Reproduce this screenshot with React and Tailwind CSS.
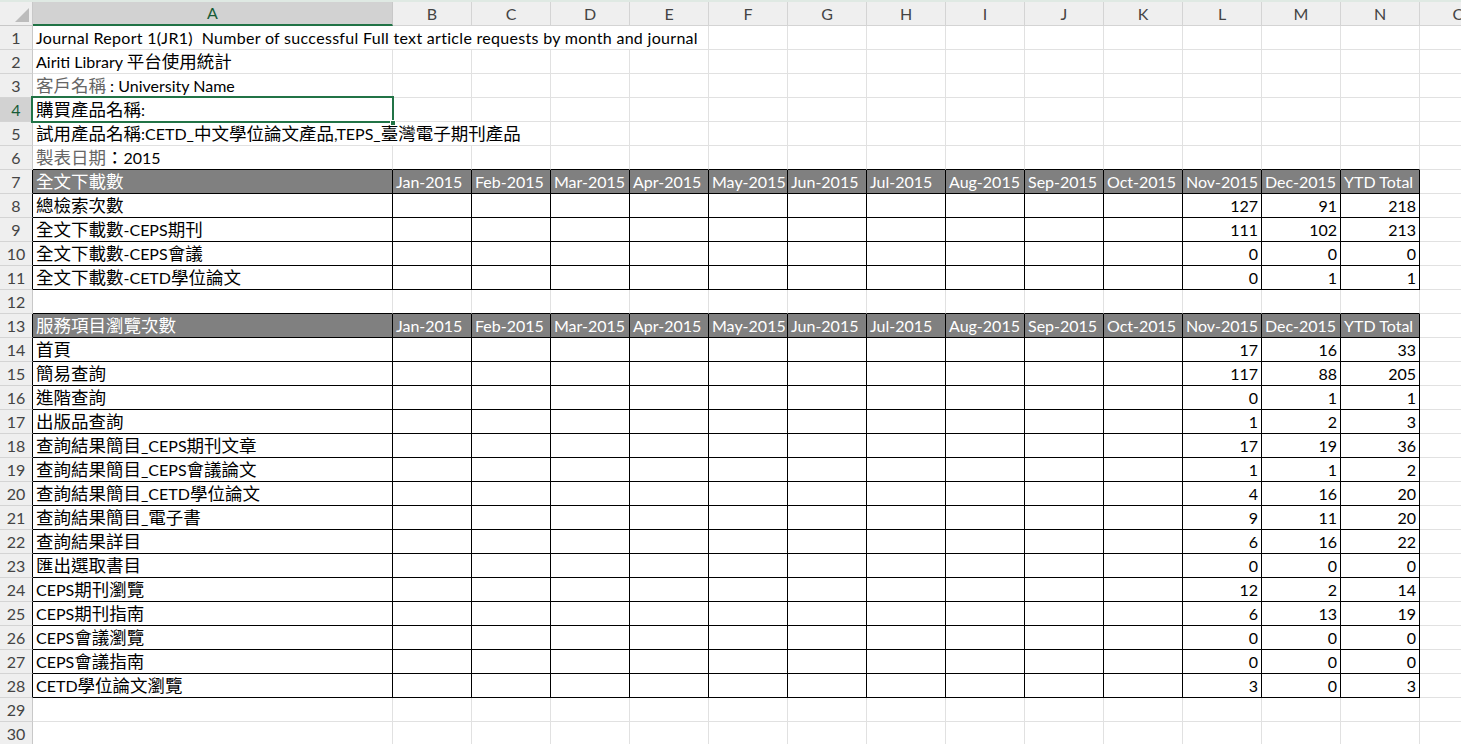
import React from 'react';

const COLS = ['A', 'B', 'C', 'D', 'E', 'F', 'G', 'H', 'I', 'J', 'K', 'L', 'M', 'N', 'O'];
const MONTHS = ['Jan-2015', 'Feb-2015', 'Mar-2015', 'Apr-2015', 'May-2015', 'Jun-2015', 'Jul-2015', 'Aug-2015', 'Sep-2015', 'Oct-2015', 'Nov-2015', 'Dec-2015', 'YTD Total'];

const table1 = [
  ['總檢索次數', 127, 91, 218],
  ['全文下載數-CEPS期刊', 111, 102, 213],
  ['全文下載數-CEPS會議', 0, 0, 0],
  ['全文下載數-CETD學位論文', 0, 1, 1],
];

const table2 = [
  ['首頁', 17, 16, 33],
  ['簡易查詢', 117, 88, 205],
  ['進階查詢', 0, 1, 1],
  ['出版品查詢', 1, 2, 3],
  ['查詢結果簡目_CEPS期刊文章', 17, 19, 36],
  ['查詢結果簡目_CEPS會議論文', 1, 1, 2],
  ['查詢結果簡目_CETD學位論文', 4, 16, 20],
  ['查詢結果簡目_電子書', 9, 11, 20],
  ['查詢結果詳目', 6, 16, 22],
  ['匯出選取書目', 0, 0, 0],
  ['CEPS期刊瀏覽', 12, 2, 14],
  ['CEPS期刊指南', 6, 13, 19],
  ['CEPS會議瀏覽', 0, 0, 0],
  ['CEPS會議指南', 0, 0, 0],
  ['CETD學位論文瀏覽', 3, 0, 3],
];

// CJK runs get the bigger size, like the Excel fallback font does
function mix(text, extra = '') {
  const parts = text.split(/([\u3000-\u9fff\uff00-\uffef]+)/);
  return parts.map((p, i) =>
    /[\u3000-\u9fff\uff00-\uffef]/.test(p) ? (
      <span key={i} className={`text-[17.5px] ${extra}`}>{p}</span>
    ) : (
      <span key={i}>{p}</span>
    )
  );
}

function buildRows() {
  const rows = {};
  rows[1] = { span: 5, text: <span className="tracking-[0.3px]">Journal Report 1(JR1)  Number of successful Full text article requests by month and journal</span> };
  rows[2] = { text: mix('Airiti Library 平台使用統計') };
  rows[3] = { text: <>{mix('客戶名稱', 'text-[#666]')} : University Name</> };
  rows[4] = { text: mix('購買產品名稱:') };
  rows[5] = { span: 3, text: mix('試用產品名稱:CETD_中文學位論文產品,TEPS_臺灣電子期刊產品') };
  rows[6] = { text: <>{mix('製表日期', 'text-[#666]')}{mix('：')}2015</> };
  rows[7] = { header: '全文下載數' };
  table1.forEach((r, i) => { rows[8 + i] = { data: r }; });
  rows[13] = { header: '服務項目瀏覽次數' };
  table2.forEach((r, i) => { rows[14 + i] = { data: r }; });
  return rows;
}

const isTable = (r) => (r >= 7 && r <= 11) || (r >= 13 && r <= 28);

function Cell({ r, c, children, right, gray, wide }) {
  const inTbl = c <= 13;
  const rb = inTbl && isTable(r) ? 'border-r-black' : 'border-r-[#e1e1e1]';
  const bb = inTbl && (isTable(r) || isTable(r + 1)) ? 'border-b-black' : 'border-b-[#e1e1e1]';
  return (
    <div
      className={`shrink-0 h-[24px] border-r border-b ${rb} ${bb} ${wide || (c === 0 ? 'w-[360px]' : 'w-[79px]')} ${gray ? 'bg-[#808080] text-white' : 'text-black'} flex items-end pb-[3px] ${right ? 'justify-end pr-[3px]' : 'pl-[3px]'} whitespace-pre overflow-visible`}
    >
      {children}
    </div>
  );
}

export default function App() {
  const rows = buildRows();
  const rowNums = Array.from({ length: 30 }, (_, i) => i + 1);

  return (
    <div
      className="relative w-[1461px] h-[744px] overflow-hidden bg-white text-[16px] leading-none border-t-2 border-t-[#dfe9e3]"
      style={{ fontFamily: 'Lato, "Noto Sans CJK TC", sans-serif' }}
    >
      {/* column headers */}
      <div className="flex h-[24px]">
        <div className="shrink-0 w-[33px] h-[24px] bg-[#efefef] border-r border-b border-[#c8c8c8] relative">
          <div className="absolute right-[3px] bottom-[3px] w-0 h-0 border-l-[14px] border-l-transparent border-b-[14px] border-b-[#bcbcbc]" />
        </div>
        {COLS.map((l, i) => (
          <div
            key={l}
            className={`shrink-0 h-[24px] flex items-center justify-center text-[16px] ${i === 0 ? 'w-[360px] bg-[#d2d2d2] text-[#185c37] border-r border-r-[#c8c8c8] border-b-2 border-b-[#217346]' : 'w-[79px] bg-[#efefef] text-[#444] border-r border-b border-[#d4d4d4]'}`}
          >
            {l}
          </div>
        ))}
      </div>

      {rowNums.map((r) => {
        const row = rows[r] || {};
        const headerBorder = isTable(r) ? 'border-r-black' : r === 4 ? 'border-r-[#217346]' : 'border-r-[#c8c8c8]';
        const cells = [];
        if (row.header) {
          cells.push(<Cell key="a" r={r} c={0} gray>{mix(row.header)}</Cell>);
          MONTHS.forEach((m, i) => cells.push(<Cell key={m} r={r} c={i + 1} gray>{m}</Cell>));
          cells.push(<Cell key="o" r={r} c={14} />);
        } else if (row.data) {
          const [label, nov, dec, ytd] = row.data;
          cells.push(<Cell key="a" r={r} c={0}>{mix(label)}</Cell>);
          for (let c = 1; c <= 10; c++) cells.push(<Cell key={c} r={r} c={c} />);
          cells.push(<Cell key="l" r={r} c={11} right>{nov}</Cell>);
          cells.push(<Cell key="m" r={r} c={12} right>{dec}</Cell>);
          cells.push(<Cell key="n" r={r} c={13} right>{ytd}</Cell>);
          cells.push(<Cell key="o" r={r} c={14} />);
        } else {
          const span = row.span || 1;
          const wide = span === 5 ? 'w-[676px]' : span === 3 ? 'w-[518px]' : undefined;
          cells.push(<Cell key="a" r={r} c={span - 1} wide={wide}>{row.text}</Cell>);
          for (let c = span; c <= 14; c++) cells.push(<Cell key={c} r={r} c={c} />);
        }
        return (
          <div key={r} className="flex h-[24px]">
            <div
              className={`shrink-0 w-[33px] h-[24px] flex items-center justify-center text-[16px] border-r border-b border-b-[#d4d4d4] ${headerBorder} ${r === 4 ? 'bg-[#d2d2d2] text-[#185c37]' : 'bg-[#efefef] text-[#444]'}`}
            >
              {r}
            </div>
            {cells}
          </div>
        );
      })}

      {/* active cell A4 */}
      <div className="absolute left-[31px] top-[94px] w-[363px] h-[27px] border-2 border-[#217346] pointer-events-none" />
      <div className="absolute left-[390px] top-[118px] w-[6px] h-[6px] bg-[#217346] border border-white" />
    </div>
  );
}
